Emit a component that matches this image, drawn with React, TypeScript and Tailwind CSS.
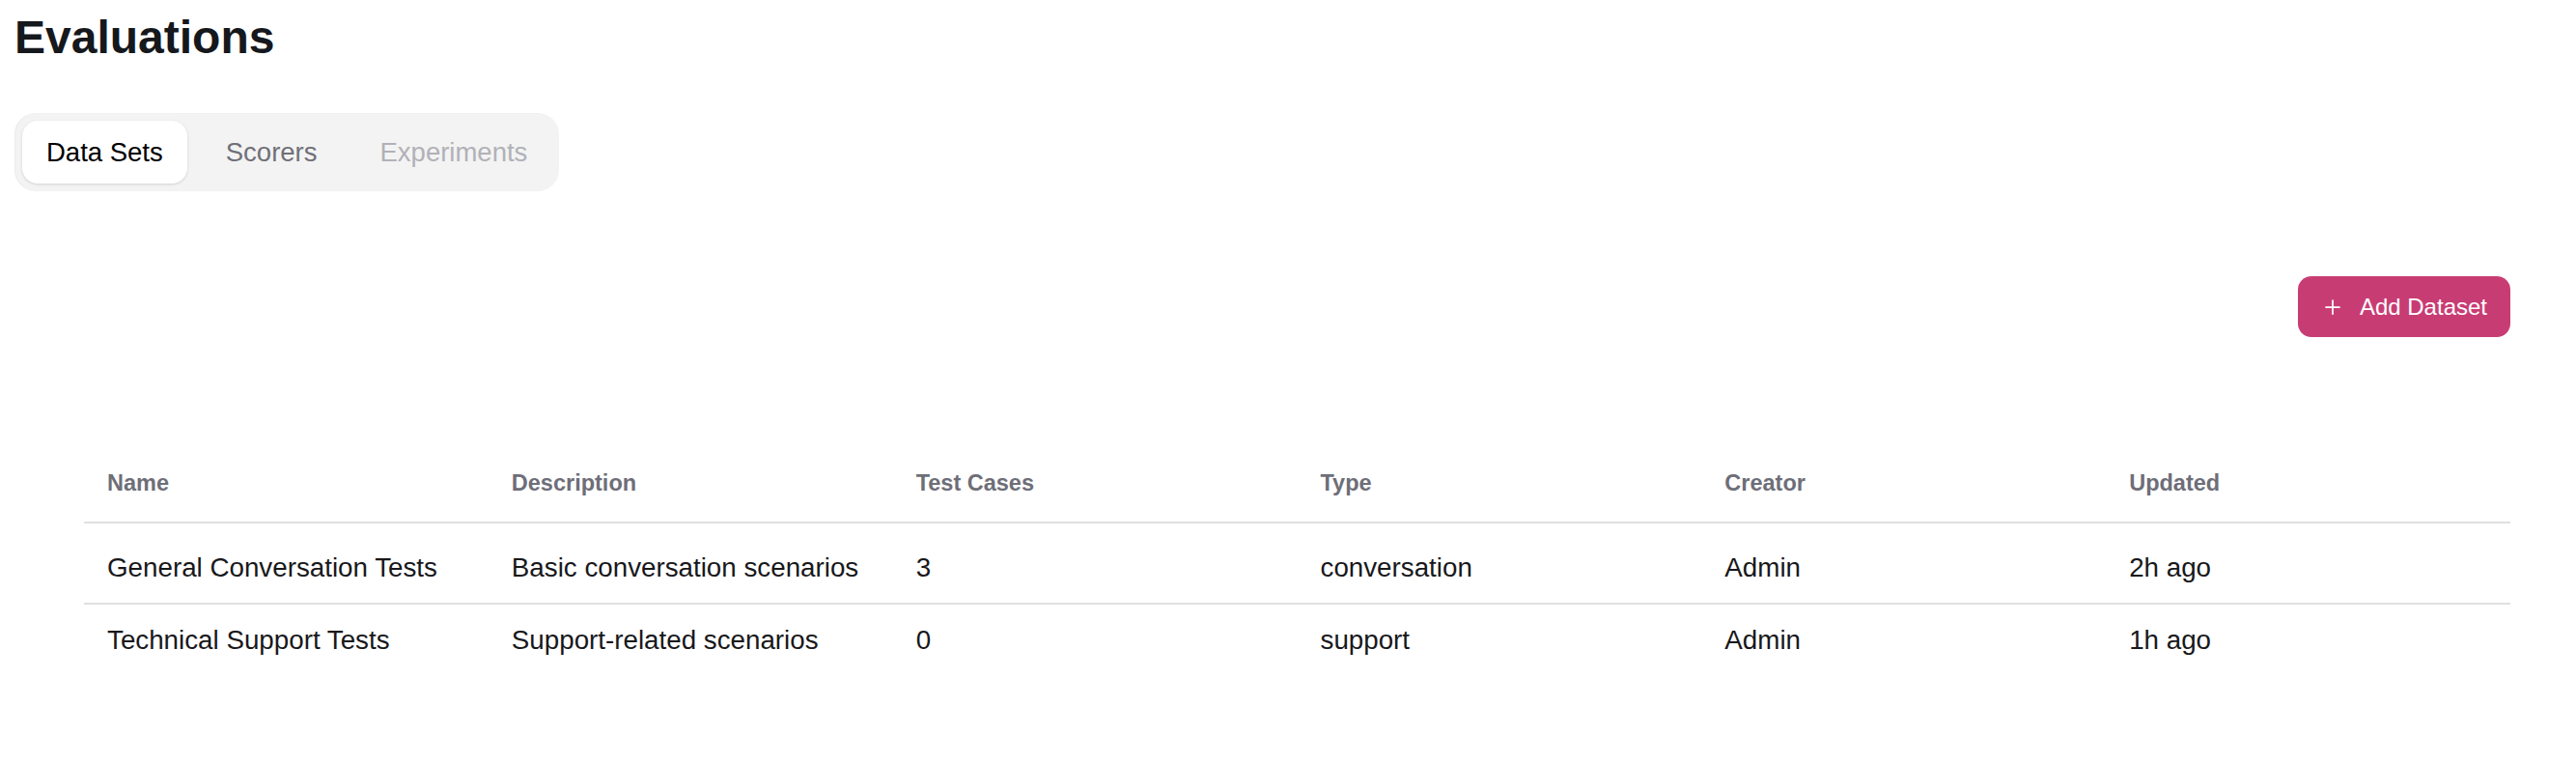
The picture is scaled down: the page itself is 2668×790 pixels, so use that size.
import { Plus } from "lucide-react";

type Dataset = {
  name: string;
  description: string;
  testCases: number;
  type: string;
  creator: string;
  updated: string;
};

const COLUMNS = ["Name", "Description", "Test Cases", "Type", "Creator", "Updated"];

const DATASETS: Dataset[] = [
  {
    name: "General Conversation Tests",
    description: "Basic conversation scenarios",
    testCases: 3,
    type: "conversation",
    creator: "Admin",
    updated: "2h ago"
  },
  {
    name: "Technical Support Tests",
    description: "Support-related scenarios",
    testCases: 0,
    type: "support",
    creator: "Admin",
    updated: "1h ago"
  }
];

const TABS = [
  { label: "Data Sets", state: "active" },
  { label: "Scorers", state: "idle" },
  { label: "Experiments", state: "disabled" }
];

const tabClass = (state: string) => {
  if (state === "active") return "bg-white text-black shadow-[0_1px_3px_rgba(0,0,0,0.14)]";
  if (state === "disabled") return "text-[#b1b1b8]";
  return "text-[#707079]";
};

export default function App() {
  return (
    <div className="min-h-screen bg-white px-[15px] pt-[15px] font-['Liberation_Sans',Arial,sans-serif]">
      <h1 className="text-[48px] font-bold leading-none text-[#15181c]">Evaluations</h1>

      <div className="mt-[54px] inline-flex gap-[15px] rounded-[22px] bg-[#f3f3f3] p-2 shadow-[inset_1px_0_2px_rgba(0,0,0,0.04)]">
        {TABS.map((tab) => (
          <button
            className={`h-[65px] rounded-[16px] px-[25px] text-[27.5px] leading-none ${tabClass(tab.state)}`}
            key={tab.label}
            type="button"
          >
            {tab.label}
          </button>
        ))}
      </div>

      <div className="pl-[72px] pr-[53px]">
        <div className="mt-[88px] flex justify-end">
          <button
            className="flex h-[63px] items-center gap-4 rounded-[14px] bg-[#c83c74] px-6 text-[24px] text-white"
            type="button"
          >
            <Plus className="h-6 w-6" strokeWidth={1.75} />
            <span>Add Dataset</span>
          </button>
        </div>

        <div className="mt-[113px]">
          <div className="grid h-[80px] grid-cols-6 items-center border-b-2 border-[#e0e0e0]">
            {COLUMNS.map((column) => (
              <div className="px-6 text-[23.5px] font-bold text-[#6e6e78]" key={column}>
                {column}
              </div>
            ))}
          </div>

          {DATASETS.map((row, index) => {
            const last = index === DATASETS.length - 1;
            return (
              <div
                className={`grid grid-cols-6 items-center text-[27.75px] text-[#18181b] ${
                  index === 0 ? "pt-[10px]" : ""
                } ${last ? "h-[74px]" : "h-[84px] border-b-2 border-[#e0e0e0]"}`}
                key={row.name}
              >
                <div className="px-6 whitespace-nowrap">{row.name}</div>
                <div className="px-6 whitespace-nowrap">{row.description}</div>
                <div className="px-6">{row.testCases}</div>
                <div className="px-6">{row.type}</div>
                <div className="px-6">{row.creator}</div>
                <div className="px-6">{row.updated}</div>
              </div>
            );
          })}
        </div>
      </div>
    </div>
  );
}
